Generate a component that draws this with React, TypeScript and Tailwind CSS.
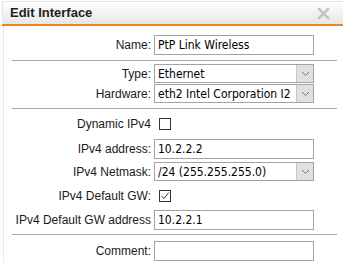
import React from "react";

const inputFont = "font-['DejaVu_Sans_Condensed','DejaVu_Sans',sans-serif] font-stretch-condensed text-[12px] text-black";

function Label({ children }: { children: React.ReactNode }) {
  return (
    <div className="w-[147px] shrink-0 text-right text-[12px] text-[#1a1a1a] leading-none">{children}</div>
  );
}

function TextInput({ value }: { value: string }) {
  return (
    <div className={`ml-[3px] w-[160px] h-[20px] border border-[#a3a3a3] bg-white flex items-center pl-[3px] ${inputFont}`}>
      {value}
    </div>
  );
}

function Select({ value }: { value: string }) {
  return (
    <div className={`ml-[3px] w-[160px] h-[19px] border border-[#a3a3a3] bg-white flex items-center ${inputFont}`}>
      <div className="flex-1 pl-[3px] overflow-hidden whitespace-nowrap">{value}</div>
      <div className="w-[17px] h-full bg-[#e0e0e0] border-l border-[#c8c8c8] flex items-center justify-center">
        <svg width="9" height="6" viewBox="0 0 9 6">
          <path d="M1 1 L4.5 4.5 L8 1" fill="none" stroke="#7a7a7a" strokeWidth="1" />
        </svg>
      </div>
    </div>
  );
}

function Checkbox({ checked }: { checked?: boolean }) {
  return (
    <div className="ml-[8px] w-[12px] h-[12px] border border-[#333] bg-white flex items-center justify-center">
      {checked && (
        <svg width="10" height="10" viewBox="0 0 10 10">
          <path d="M1.5 5 L4 7.5 L8.8 1.5" fill="none" stroke="#333" strokeWidth="1" />
        </svg>
      )}
    </div>
  );
}

function Sep() {
  return <div className="ml-[8px] mr-[6px] h-px bg-[#a9a9a9]" />;
}

export default function App() {
  return (
    <div className="w-[343px] h-[262px] bg-white overflow-hidden font-['Liberation_Sans',Arial,sans-serif]">
      <div className="ml-[2px] mt-[1px] h-[23px] bg-gradient-to-b from-white to-[#e6e6e6] border-t border-l border-[#e4e4e4] flex items-center justify-between pl-[7px] pr-[13px]">
        <span className="text-[13px] font-bold text-[#222]">Edit Interface</span>
        <svg width="13" height="13" viewBox="0 0 13 13">
          <path d="M2 2 L11 11 M11 2 L2 11" stroke="#c4c4c4" strokeWidth="2.8" strokeLinecap="round" />
        </svg>
      </div>
      <div className="ml-[2px] h-[2px] bg-[#e8891d]" />
      <div className="ml-[3px] border-l border-dotted border-[#d6d6d6] h-[236px]">
        <div className="pt-[9px] flex items-center">
          <Label>Name:</Label>
          <TextInput value="PtP Link Wireless" />
        </div>
        <div className="mt-[5px]"><Sep /></div>
        <div className="mt-[3px] flex items-center">
          <Label>Type:</Label>
          <Select value="Ethernet" />
        </div>
        <div className="mt-[1px] flex items-center">
          <Label>Hardware:</Label>
          <Select value="eth2 Intel Corporation I2" />
        </div>
        <div className="mt-[5px]"><Sep /></div>
        <div className="h-[30px] flex items-center">
          <Label>Dynamic IPv4</Label>
          <Checkbox />
        </div>
        <div className="flex items-center">
          <Label>IPv4 address:</Label>
          <TextInput value="10.2.2.2" />
        </div>
        <div className="mt-[3px] flex items-center">
          <Label>IPv4 Netmask:</Label>
          <Select value="/24 (255.255.255.0)" />
        </div>
        <div className="mt-[2px] h-[26px] flex items-center">
          <Label>IPv4 Default GW:</Label>
          <Checkbox checked />
        </div>
        <div className="mt-[1px] flex items-center">
          <Label>IPv4 Default GW address</Label>
          <TextInput value="10.2.2.1" />
        </div>
        <div className="mt-[4px]"><Sep /></div>
        <div className="mt-[6px] flex items-center">
          <Label>Comment:</Label>
          <TextInput value="" />
        </div>
      </div>
    </div>
  );
}
